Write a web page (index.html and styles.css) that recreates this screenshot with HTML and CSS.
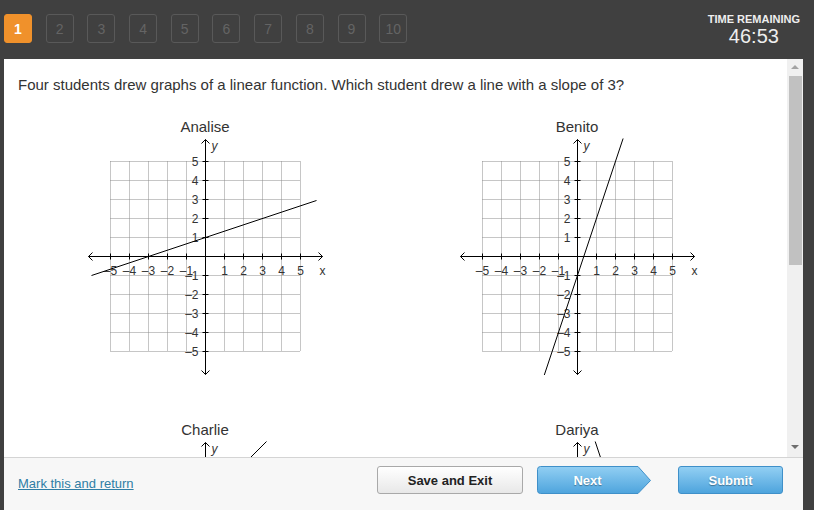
FILE: index.html
```html
<!DOCTYPE html>
<html>
<head>
<meta charset="utf-8">
<link rel="stylesheet" href="styles.css">
</head>
<body>
<div class="app">
  <header class="topbar">
    <nav class="qnav">
      <span class="qbtn current">1</span>
      <span class="qbtn">2</span>
      <span class="qbtn">3</span>
      <span class="qbtn">4</span>
      <span class="qbtn">5</span>
      <span class="qbtn">6</span>
      <span class="qbtn">7</span>
      <span class="qbtn">8</span>
      <span class="qbtn">9</span>
      <span class="qbtn">10</span>
    </nav>
    <div class="timer">
      <div class="timer-label">TIME REMAINING</div>
      <div class="timer-value">46:53</div>
    </div>
  </header>
  <div class="main">
    <div class="body">
      <div class="content">
        <p class="question">Four students drew graphs of a linear function. Which student drew a line with a slope of 3?</p>
        <div class="graphs">
          <figure class="graph">
            <figcaption>Analise</figcaption>
            <svg viewBox="-125.5 -120.5 250 244">
              <path class="grid" d="M-95 -95V95M-76 -95V95M-57 -95V95M-38 -95V95M-19 -95V95M19 -95V95M38 -95V95M57 -95V95M76 -95V95M95 -95V95M-95 -95H95M-95 -76H95M-95 -57H95M-95 -38H95M-95 -19H95M-95 19H95M-95 38H95M-95 57H95M-95 76H95M-95 95H95"/>
              <path class="axis" d="M-117 0H117M0 -117V118M-113 -4L-117 0L-113 4M113 -4L117 0L113 4M-4 -113L0 -117L4 -113M-4 114L0 118L4 114M-95 -3V3M-76 -3V3M-57 -3V3M-38 -3V3M-19 -3V3M19 -3V3M38 -3V3M57 -3V3M76 -3V3M95 -3V3M-3 -95H3M-3 -76H3M-3 -57H3M-3 -38H3M-3 -19H3M-3 19H3M-3 38H3M-3 57H3M-3 76H3M-3 95H3"/>
              <g class="ylab"><text x="-7" y="-91">5</text><text x="-7" y="-72">4</text><text x="-7" y="-53">3</text><text x="-7" y="-34">2</text><text x="-7" y="-15">1</text><text x="-7" y="23">–1</text><text x="-7" y="42">–2</text><text x="-7" y="61">–3</text><text x="-7" y="80">–4</text><text x="-7" y="99">–5</text></g>
              <g class="xlab"><text x="-95" y="18">–5</text><text x="-76" y="18">–4</text><text x="-57" y="18">–3</text><text x="-38" y="18">–2</text><text x="-19" y="18">–1</text><text x="19" y="18">1</text><text x="38" y="18">2</text><text x="57" y="18">3</text><text x="76" y="18">4</text><text x="95" y="18">5</text></g>
              <text class="vname" x="6" y="-107">y</text>
              <text class="hname" x="117" y="18">x</text>
              <line class="fn" x1="-114" y1="19" x2="111" y2="-56"/>
            </svg>
          </figure>
          <figure class="graph">
            <figcaption>Benito</figcaption>
            <svg viewBox="-125.5 -120.5 250 244">
              <path class="grid" d="M-95 -95V95M-76 -95V95M-57 -95V95M-38 -95V95M-19 -95V95M19 -95V95M38 -95V95M57 -95V95M76 -95V95M95 -95V95M-95 -95H95M-95 -76H95M-95 -57H95M-95 -38H95M-95 -19H95M-95 19H95M-95 38H95M-95 57H95M-95 76H95M-95 95H95"/>
              <path class="axis" d="M-117 0H117M0 -117V118M-113 -4L-117 0L-113 4M113 -4L117 0L113 4M-4 -113L0 -117L4 -113M-4 114L0 118L4 114M-95 -3V3M-76 -3V3M-57 -3V3M-38 -3V3M-19 -3V3M19 -3V3M38 -3V3M57 -3V3M76 -3V3M95 -3V3M-3 -95H3M-3 -76H3M-3 -57H3M-3 -38H3M-3 -19H3M-3 19H3M-3 38H3M-3 57H3M-3 76H3M-3 95H3"/>
              <g class="ylab"><text x="-7" y="-91">5</text><text x="-7" y="-72">4</text><text x="-7" y="-53">3</text><text x="-7" y="-34">2</text><text x="-7" y="-15">1</text><text x="-7" y="23">–1</text><text x="-7" y="42">–2</text><text x="-7" y="61">–3</text><text x="-7" y="80">–4</text><text x="-7" y="99">–5</text></g>
              <g class="xlab"><text x="-95" y="18">–5</text><text x="-76" y="18">–4</text><text x="-57" y="18">–3</text><text x="-38" y="18">–2</text><text x="-19" y="18">–1</text><text x="19" y="18">1</text><text x="38" y="18">2</text><text x="57" y="18">3</text><text x="76" y="18">4</text><text x="95" y="18">5</text></g>
              <text class="vname" x="6" y="-107">y</text>
              <text class="hname" x="117" y="18">x</text>
              <line class="fn" x1="-33.2" y1="118.5" x2="45.6" y2="-118"/>
            </svg>
          </figure>
          <figure class="graph">
            <figcaption>Charlie</figcaption>
            <svg viewBox="-125.5 -120.5 250 244">
              <path class="grid" d="M-95 -95V95M-76 -95V95M-57 -95V95M-38 -95V95M-19 -95V95M19 -95V95M38 -95V95M57 -95V95M76 -95V95M95 -95V95M-95 -95H95M-95 -76H95M-95 -57H95M-95 -38H95M-95 -19H95M-95 19H95M-95 38H95M-95 57H95M-95 76H95M-95 95H95"/>
              <path class="axis" d="M-117 0H117M0 -117V118M-113 -4L-117 0L-113 4M113 -4L117 0L113 4M-4 -113L0 -117L4 -113M-4 114L0 118L4 114"/>
              <text class="vname" x="6" y="-107">y</text>
              <line class="fn" x1="-114" y1="57" x2="61" y2="-118"/>
            </svg>
          </figure>
          <figure class="graph">
            <figcaption>Dariya</figcaption>
            <svg viewBox="-125.5 -120.5 250 244">
              <path class="grid" d="M-95 -95V95M-76 -95V95M-57 -95V95M-38 -95V95M-19 -95V95M19 -95V95M38 -95V95M57 -95V95M76 -95V95M95 -95V95M-95 -95H95M-95 -76H95M-95 -57H95M-95 -38H95M-95 -19H95M-95 19H95M-95 38H95M-95 57H95M-95 76H95M-95 95H95"/>
              <path class="axis" d="M-117 0H117M0 -117V118M-113 -4L-117 0L-113 4M113 -4L117 0L113 4M-4 -113L0 -117L4 -113M-4 114L0 118L4 114"/>
              <text class="vname" x="6" y="-107">y</text>
              <line class="fn" x1="17.7" y1="-118" x2="96.3" y2="117.8"/>
            </svg>
          </figure>
        </div>
      </div>
      <div class="scrollbar">
        <span class="arrow-up"></span>
        <span class="thumb"></span>
        <span class="spacer"></span>
        <span class="arrow-down"></span>
      </div>
    </div>
    <footer class="footer">
      <a class="mark" href="#">Mark this and return</a>
      <div class="actions">
        <button class="btn btn-save">Save and Exit</button>
        <button class="btn btn-next">
          <svg class="next-shape" width="115" height="29" viewBox="0 0 115 29">
            <defs>
              <linearGradient id="blue" x1="0" y1="0" x2="0" y2="1">
                <stop offset="0" stop-color="#92cff3"/>
                <stop offset="1" stop-color="#4ea4dd"/>
              </linearGradient>
            </defs>
            <path d="M3.5 0.5H101L113.5 14.5L101 27.5H3.5Q0.5 27.5 0.5 24.5V3.5Q0.5 0.5 3.5 0.5Z" fill="url(#blue)" stroke="#3f90c9"/>
          </svg>
          <span>Next</span>
        </button>
        <button class="btn btn-submit">Submit</button>
      </div>
    </footer>
  </div>
</div>
</body>
</html>
```

FILE: styles.css
```css
* { box-sizing: border-box; }

body {
  margin: 0;
  background: #404040;
  font-family: "Liberation Sans", Arial, sans-serif;
}

.app {
  width: 814px;
  height: 510px;
  display: flex;
  flex-direction: column;
}

/* top bar */
.topbar {
  height: 59px;
  flex: none;
  display: flex;
  justify-content: space-between;
  align-items: flex-start;
  padding: 0 14px 0 4px;
}

.qnav {
  display: flex;
  gap: 13.7px;
  padding-top: 14px;
}

.qbtn {
  width: 28px;
  height: 29px;
  border: 1px solid #595959;
  border-radius: 3px;
  color: #646464;
  font-size: 14px;
  display: flex;
  align-items: center;
  justify-content: center;
}

.qbtn.current {
  background: #f0912b;
  border-color: #f0912b;
  color: #fff;
  font-weight: bold;
}

.timer {
  padding-top: 13px;
  text-align: center;
  color: #eeeeee;
}

.timer-label {
  font-size: 11px;
  font-weight: bold;
  line-height: 12px;
}

.timer-value {
  font-size: 20px;
  line-height: 22px;
}

/* main */
.main {
  flex: 1;
  min-height: 0;
  display: flex;
  flex-direction: column;
  margin: 0 11px 0 4px;
}

.body {
  flex: 1;
  min-height: 0;
  display: flex;
  background: #fff;
}

.content {
  flex: 1;
  overflow: hidden;
  padding: 17px 0 0 14px;
  color: #333;
}

.question {
  margin: 0;
  font-size: 15px;
  line-height: 18px;
}

.graphs {
  display: grid;
  grid-template-columns: 372px 372px;
  row-gap: 41px;
  margin: 24px 0 0 1px;
}

.graph {
  margin: 0;
  display: flex;
  flex-direction: column;
  align-items: center;
}

.graph figcaption {
  font-size: 15px;
  line-height: 18px;
  color: #333;
}

.graph svg {
  display: block;
  width: 250px;
  height: 244px;
}

.grid {
  fill: none;
  stroke: #8c8c8c;
  stroke-width: 1;
  stroke-dasharray: 1 1;
}

.axis {
  fill: none;
  stroke: #000;
  stroke-width: 1;
}

.fn {
  stroke: #000;
  stroke-width: 1;
}

.ylab text,
.xlab text,
.hname,
.vname {
  font-family: "Liberation Sans", Arial, sans-serif;
  font-size: 12px;
  fill: #333;
}

.ylab text { text-anchor: end; }
.xlab text { text-anchor: middle; }
.hname { text-anchor: middle; }
.vname { font-style: italic; }

/* scrollbar */
.scrollbar {
  width: 16px;
  flex: none;
  background: #f0f0f0;
  display: flex;
  flex-direction: column;
  align-items: center;
}

.arrow-up {
  margin-top: 6px;
  width: 0;
  height: 0;
  border-left: 4px solid transparent;
  border-right: 4px solid transparent;
  border-bottom: 4px solid #a3a3a3;
}

.thumb {
  align-self: stretch;
  margin: 7px 1px 0 2px;
  height: 189px;
  background: #c1c1c1;
}

.spacer { flex: 1; }

.arrow-down {
  margin-bottom: 8px;
  width: 0;
  height: 0;
  border-left: 4px solid transparent;
  border-right: 4px solid transparent;
  border-top: 4px solid #6e6e6e;
}

/* footer */
.footer {
  height: 53px;
  flex: none;
  border-top: 1px solid #d4d4d4;
  background: #f7f7f7;
  display: flex;
  align-items: flex-start;
  padding: 0 20px 0 14px;
}

.mark {
  margin-top: 18px;
  font-size: 13px;
  line-height: 15px;
  color: #2f7ea5;
  text-decoration: underline;
}

.actions {
  margin-left: auto;
  margin-top: 8px;
  display: flex;
}

.btn {
  height: 28px;
  padding: 0;
  font-family: "Liberation Sans", Arial, sans-serif;
  font-size: 13px;
  font-weight: bold;
  border-radius: 3px;
  cursor: pointer;
}

.btn-save {
  width: 146px;
  border: 1px solid #a9a9a9;
  background: linear-gradient(#ffffff, #e8e8e8);
  color: #222;
}

.btn-next {
  position: relative;
  width: 114px;
  margin-left: 14px;
  border: none;
  background: transparent;
  color: #fff;
  text-shadow: 0 1px 1px rgba(0, 0, 0, 0.35);
}

.next-shape {
  position: absolute;
  left: 0;
  top: 0;
}

.btn-next span {
  position: relative;
  display: block;
  width: 101px;
  text-align: center;
}

.btn-submit {
  width: 105px;
  margin-left: 27px;
  border: 1px solid #3f90c9;
  background: linear-gradient(#92cff3, #4ea4dd);
  color: #fff;
  text-shadow: 0 1px 1px rgba(0, 0, 0, 0.35);
}
```
